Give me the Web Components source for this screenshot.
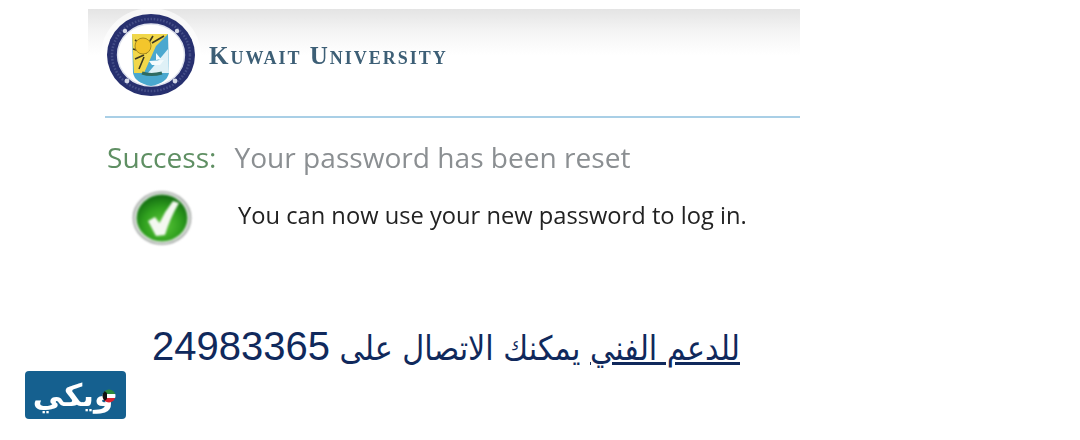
<!DOCTYPE html>
<html lang="en">
<head>
<meta charset="utf-8">
<title>Kuwait University</title>
<style>
    html, body { margin: 0; background: #fff; }
    body { width: 1080px; height: 440px; overflow: hidden; }
</style>
</head>
<body>
<ku-page>
    <ku-header>Kuwait University</ku-header>
    <ku-status label="Success:" title-text="Your password has been reset">You can now use your new password to log in.</ku-status>
    <ku-support phone="24983365"></ku-support>
    <wiki-badge></wiki-badge>
</ku-page>

<script>
class KuPage extends HTMLElement {
    constructor() {
        super();
        this.attachShadow({ mode: 'open' });
        this.shadowRoot.innerHTML = `
            <style>
                :host {
                    display: flex;
                    flex-direction: column;
                    padding-top: 9px;
                }
            </style>
            <slot></slot>
        `;
    }
}

class KuSeal extends HTMLElement {
    constructor() {
        super();
        this.attachShadow({ mode: 'open' });
        this.shadowRoot.innerHTML = `
            <style>
                :host { display: block; width: 90px; height: 84px; filter: blur(0.7px); }
                svg { display: block; overflow: visible; }
            </style>
            <svg width="90" height="84" viewBox="0 0 90 84">
                <ellipse cx="45" cy="42" rx="50" ry="47" fill="#fff" opacity="0.6"/>
                <ellipse cx="45" cy="42" rx="44" ry="41" fill="#27306f"/>
                <ellipse cx="45" cy="42" rx="39" ry="36" fill="none" stroke="#7f89b5" stroke-width="2.5" stroke-dasharray="1.6 1.6" opacity="0.35"/>
                <ellipse cx="45" cy="42" rx="33.5" ry="31" fill="#fff" stroke="#dfe3ee" stroke-width="1.4"/>
                <g fill="#d5d9e8">
                    <circle cx="21" cy="68" r="2.4"/>
                    <circle cx="69" cy="68" r="2.4"/>
                    <circle cx="19" cy="18" r="2.2"/>
                    <circle cx="71" cy="18" r="2.2"/>
                </g>
                <path d="M26 21 L62 21 L63 60 Q61 70 45 73 Q29 70 27 60 Z" fill="#4aa8cf"/>
                <path d="M26 21 L62 21 L50 33 L38 60 L28 60 Z" fill="#f1d74a"/>
                <path d="M42 60 L62 36 L63 60 Z" fill="#dff1f7"/>
                <path d="M29 27 L42 36 M27 36 L41 40 M29 46 L38 42 M33 56 L38 44 M47 23 L42 31 M58 23 L46 30" stroke="#3d3a22" stroke-width="1.6"/>
                <circle cx="37" cy="33" r="8" fill="#f3c62c" stroke="#a78b1f" stroke-width="1"/>
                <path d="M43 48 L58 47 L54 52 L46 52 Z" fill="#f4fbfd"/>
                <path d="M50 47 L50 40 L55 46 Z" fill="#f4fbfd"/>
                <path d="M36 60 Q45 63 56 60" stroke="#2f6b62" stroke-width="3" fill="none"/>
            </svg>
        `;
    }
}

class KuHeader extends HTMLElement {
    constructor() {
        super();
        this.attachShadow({ mode: 'open' });
        this.shadowRoot.innerHTML = `
            <style>
                :host {
                    display: block;
                    width: 712px;
                    margin-left: 88px;
                    height: 109px;
                    box-sizing: border-box;
                    background: linear-gradient(#e4e4e4, #f4f4f4 22px, #fff 46px);
                    position: relative;
                }
                .brand {
                    display: flex;
                    align-items: flex-start;
                    gap: 13px;
                    padding: 4px 0 0 18px;
                }
                .name {
                    margin-top: 28px;
                    font: bold 25px/30px "Liberation Serif", serif;
                    font-variant: small-caps;
                    letter-spacing: 2px;
                    color: #3d5f76;
                    filter: blur(0.5px);
                    white-space: nowrap;
                }
                .rule {
                    position: absolute;
                    left: 17px;
                    right: 0;
                    bottom: 0;
                    height: 2px;
                    background: #a9cfe6;
                }
            </style>
            <div class="brand">
                <ku-seal></ku-seal>
                <div class="name"><slot></slot></div>
            </div>
            <div class="rule"></div>
        `;
    }
}

class KuCheck extends HTMLElement {
    constructor() {
        super();
        this.attachShadow({ mode: 'open' });
        this.shadowRoot.innerHTML = `
            <style>
                :host { display: block; width: 60px; height: 54px; filter: blur(0.8px); }
                svg { display: block; }
            </style>
            <svg width="60" height="54" viewBox="0 0 60 54">
                <defs>
                    <radialGradient id="g" cx="0.5" cy="0.65" r="0.62">
                        <stop offset="0" stop-color="#5cc83a"/>
                        <stop offset="0.6" stop-color="#2f9f1e"/>
                        <stop offset="1" stop-color="#146f12"/>
                    </radialGradient>
                </defs>
                <ellipse cx="30" cy="27" rx="28.5" ry="26" fill="#eceeec" stroke="#9ba19d" stroke-width="1.6"/>
                <ellipse cx="30" cy="27" rx="25.5" ry="23.5" fill="url(#g)"/>
                <path d="M16 30 L23 26 L27.5 32 Q33 20 41 10 L47 12 Q38 27 33 44 L24 45 Z" fill="#f4f8f1"/>
            </svg>
        `;
    }
}

class KuStatus extends HTMLElement {
    constructor() {
        super();
        this.attachShadow({ mode: 'open' });
        const label = this.getAttribute('label');
        const titleText = this.getAttribute('title-text');
        this.shadowRoot.innerHTML = `
            <style>
                :host {
                    display: block;
                    padding: 22px 0 0 107px;
                    font-family: "Open Sans", sans-serif;
                }
                .head {
                    display: flex;
                    gap: 18px;
                    font-size: 28.1px;
                    line-height: 34px;
                    white-space: nowrap;
                    filter: blur(0.5px);
                }
                .label { color: #5f8f63; }
                .title { color: #8b8f92; }
                .body {
                    display: flex;
                    align-items: center;
                    gap: 46px;
                    margin: 17px 0 0 25px;
                }
                .text {
                    font-size: 23.7px;
                    color: #222;
                    white-space: nowrap;
                    filter: blur(0.4px);
                    margin-bottom: 7px;
                }
            </style>
            <div class="head">
                <span class="label">${label}</span>
                <span class="title">${titleText}</span>
            </div>
            <div class="body">
                <ku-check></ku-check>
                <div class="text"><slot></slot></div>
            </div>
        `;
    }
}

class KuSupport extends HTMLElement {
    constructor() {
        super();
        this.attachShadow({ mode: 'open' });
        const phone = this.getAttribute('phone');
        this.shadowRoot.innerHTML = `
            <style>
                :host {
                    display: block;
                    margin-top: 79px;
                    padding-right: 340px;
                    direction: rtl;
                    font: 33.6px/44px "DejaVu Sans Condensed", "DejaVu Sans", sans-serif;
                    color: #10295c;
                    white-space: nowrap;
                }
                a { color: inherit; text-decoration: underline; }
                .num { font: 40px/44px "Liberation Sans", sans-serif; }
            </style>
            <a>للدعم الفني</a> يمكنك الاتصال على <span class="num">${phone}</span>
        `;
    }
}

class WikiBadge extends HTMLElement {
    constructor() {
        super();
        this.attachShadow({ mode: 'open' });
        this.shadowRoot.innerHTML = `
            <style>
                :host {
                    display: flex;
                    align-items: center;
                    justify-content: center;
                    align-self: flex-start;
                    width: 101px;
                    height: 48px;
                    margin: 0 0 0 25px;
                    border-radius: 4px;
                    background: #15608f;
                    position: relative;
                    direction: rtl;
                }
                .word {
                    font: bold 31px/48px "DejaVu Sans", sans-serif;
                    color: #fff;
                    filter: blur(0.3px);
                    margin-right: 5px;
                }
                svg { position: absolute; left: 77px; top: 18px; }
            </style>
            <span class="word">ويكي</span>
            <svg width="14" height="14" viewBox="0 0 14 14">
                <clipPath id="c"><circle cx="7" cy="7" r="6.5"/></clipPath>
                <g clip-path="url(#c)">
                    <rect width="14" height="5" fill="#2c8a3e"/>
                    <rect y="5" width="14" height="4" fill="#fff"/>
                    <rect y="9" width="14" height="5" fill="#d8232f"/>
                    <path d="M0 0 L5 4 L5 10 L0 14 Z" fill="#111"/>
                </g>
            </svg>
        `;
    }
}

customElements.define('ku-page', KuPage);
customElements.define('ku-seal', KuSeal);
customElements.define('ku-header', KuHeader);
customElements.define('ku-check', KuCheck);
customElements.define('ku-status', KuStatus);
customElements.define('ku-support', KuSupport);
customElements.define('wiki-badge', WikiBadge);
</script>
</body>
</html>
